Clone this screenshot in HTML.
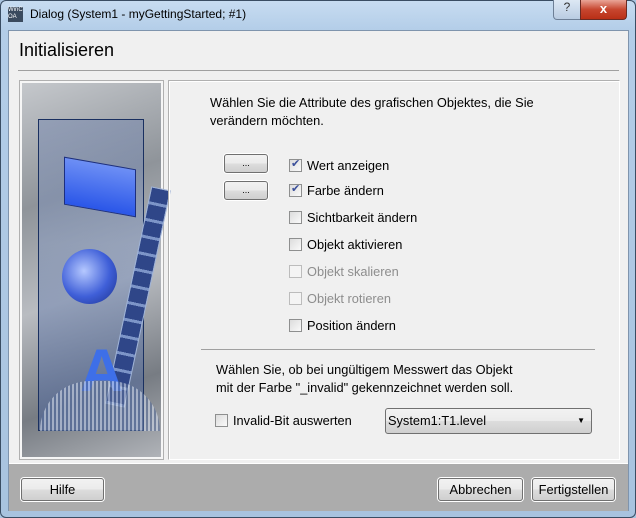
<!DOCTYPE html>
<html><head><style>
body{margin:0;width:636px;height:518px;overflow:hidden;font-family:"Liberation Sans",sans-serif;font-size:12px;color:#000;background:#a9c4e0}
.abs{position:absolute}
.frame{position:absolute;left:0;top:0;width:634px;height:516px;border:1px solid #3a4d63;border-radius:6px;background:linear-gradient(180deg,#c7dcf1 0,#b3cde8 30px,#a8c3df 100%)}
.client{position:absolute;left:8px;top:30px;width:619px;height:479px;background:#f0f0f0;border:1px solid #7f94ad}
.bottom{position:absolute;left:0;top:432px;width:619px;height:47px;background:#acacac;border-top:1px solid #fff}
.btn{position:absolute;height:21px;border:1px solid #707070;border-radius:3px;background:linear-gradient(#f2f2f2,#ebebeb 50%,#dddddd 51%,#cfcfcf);text-align:center;line-height:21px;box-shadow:0 0 0 1px #fff;font-size:12.8px}
.cb{position:absolute;width:11px;height:11px;border:1px solid #8e8f8f;background:linear-gradient(135deg,#dcdcdc,#fafafa)}
.lbl{position:absolute;font-size:12.8px}
.dis{color:#8d8d8d}
.cbd{border-color:#bcbcbc;background:#f4f4f4}
</style></head><body>
<div class="frame"></div>
<div class="abs" style="left:8px;top:7px;width:15px;height:15px;background:#3a4a5e;color:#fff;font-size:6px;line-height:7px">WinC OA</div>
<div class="abs" style="left:30px;top:7px;font-size:12px">Dialog (System1 - myGettingStarted; #1)</div>
<div class="abs" style="left:553px;top:0;width:26px;height:19px;border:1px solid #6d7f96;border-top:none;border-radius:0 0 0 4px;background:linear-gradient(#dde8f4,#b9cce2);text-align:center;font-size:12px;color:#333">?</div>
<div class="abs" style="left:580px;top:0;width:45px;height:19px;border:1px solid #6b2a22;border-top:none;border-radius:0 0 4px 0;background:linear-gradient(#e9a597,#c7462f 50%,#b92f16);text-align:center;color:#fff;font-weight:bold;font-size:13px;line-height:17px">x</div>
<div class="client">
<div class="abs" style="left:10px;top:9px;font-size:18px">Initialisieren</div>
<div class="abs" style="left:9px;top:39px;width:601px;height:1px;background:#a0a0a0"></div>
<div class="abs" style="left:10px;top:49px;width:143px;height:378px;border:1px solid #b0b0b0;background:#f6f6f6">
 <div class="abs" style="left:2px;top:2px;width:139px;height:374px;background:linear-gradient(160deg,#c5c8cc,#8f949a 30%,#b9bcc1 55%,#777c83 80%,#b0b3b8)"></div>
 <div class="abs" style="left:18px;top:38px;width:104px;height:310px;border:1px solid #1a3060;background:linear-gradient(180deg,rgba(110,130,175,.45),rgba(130,150,190,.5) 40%,rgba(70,95,150,.55));"></div>
 <div class="abs" style="left:44px;top:82px;width:70px;height:46px;background:linear-gradient(#6d8ff5,#2a56e8);transform:skewY(10deg);border:1px solid #1c2f80"></div>
 <div class="abs" style="left:42px;top:168px;width:55px;height:55px;border-radius:50%;background:radial-gradient(circle at 40% 40%,#b5c8ff,#3f5fd8 55%,#1a2f8a)"></div>
 <div class="abs" style="left:108px;top:105px;width:18px;height:220px;background:repeating-linear-gradient(#2f4688 0,#2f4688 14px,#7d95c8 14px,#7d95c8 17px);transform:rotate(12deg);border:1px solid #9fb3d8"></div>
 <div class="abs" style="left:60px;top:255px;font-size:60px;font-weight:bold;color:#3e6fe8">A</div>
 <div class="abs" style="left:20px;top:300px;width:120px;height:50px;border-radius:60px 60px 0 0;background:repeating-linear-gradient(90deg,#cfd8e8 0,#cfd8e8 2px,#5a6f99 2px,#5a6f99 4px);opacity:.6"></div>
</div>
<div class="abs" style="left:159px;top:49px;width:450px;height:378px;border:1px solid #b0b0b0;border-right-color:#fff;border-bottom-color:#fff;box-shadow:inset 1px 1px 0 #fff"></div>
<div class="lbl" style="left:201px;top:63px;line-height:18px">Wählen Sie die Attribute des grafischen Objektes, die Sie<br>verändern möchten.</div>
<div class="btn" style="left:215px;top:123px;width:42px;height:17px;line-height:17px;font-size:9px">...</div>
<div class="btn" style="left:215px;top:150px;width:42px;height:17px;line-height:17px;font-size:9px">...</div>
<div class="cb" style="left:280px;top:128px"><span style="position:absolute;left:1px;top:-3px;font-size:11px;color:#3a4f9a">✔</span></div><div class="lbl" style="left:298px;top:127px">Wert anzeigen</div>
<div class="cb" style="left:280px;top:153px"><span style="position:absolute;left:1px;top:-3px;font-size:11px;color:#3a4f9a">✔</span></div><div class="lbl" style="left:298px;top:152px">Farbe ändern</div>
<div class="cb" style="left:280px;top:180px"></div><div class="lbl" style="left:298px;top:179px">Sichtbarkeit ändern</div>
<div class="cb" style="left:280px;top:207px"></div><div class="lbl" style="left:298px;top:206px">Objekt aktivieren</div>
<div class="cb cbd" style="left:280px;top:234px"></div><div class="lbl dis" style="left:298px;top:233px">Objekt skalieren</div>
<div class="cb cbd" style="left:280px;top:261px"></div><div class="lbl dis" style="left:298px;top:260px">Objekt rotieren</div>
<div class="cb" style="left:280px;top:288px"></div><div class="lbl" style="left:298px;top:287px">Position ändern</div>
<div class="abs" style="left:192px;top:318px;width:394px;height:1px;background:#a0a0a0"></div>
<div class="lbl" style="left:207px;top:330px;line-height:18px">Wählen Sie, ob bei ungültigem Messwert das Objekt<br>mit der Farbe "_invalid" gekennzeichnet werden soll.</div>
<div class="cb" style="left:206px;top:383px"></div><div class="lbl" style="left:224px;top:382px">Invalid-Bit auswerten</div>
<div class="btn" style="left:376px;top:377px;width:205px;height:24px;line-height:24px;text-align:left;box-shadow:none"><span style="margin-left:2px">System1:T1.level</span><span style="position:absolute;right:6px;top:0;font-size:8px">▼</span></div>
<div class="bottom">
<div class="btn" style="left:12px;top:14px;width:81px">Hilfe</div>
<div class="btn" style="left:429px;top:14px;width:83px">Abbrechen</div>
<div class="btn" style="left:523px;top:14px;width:81px">Fertigstellen</div>
</div>
</div>
</body></html>
